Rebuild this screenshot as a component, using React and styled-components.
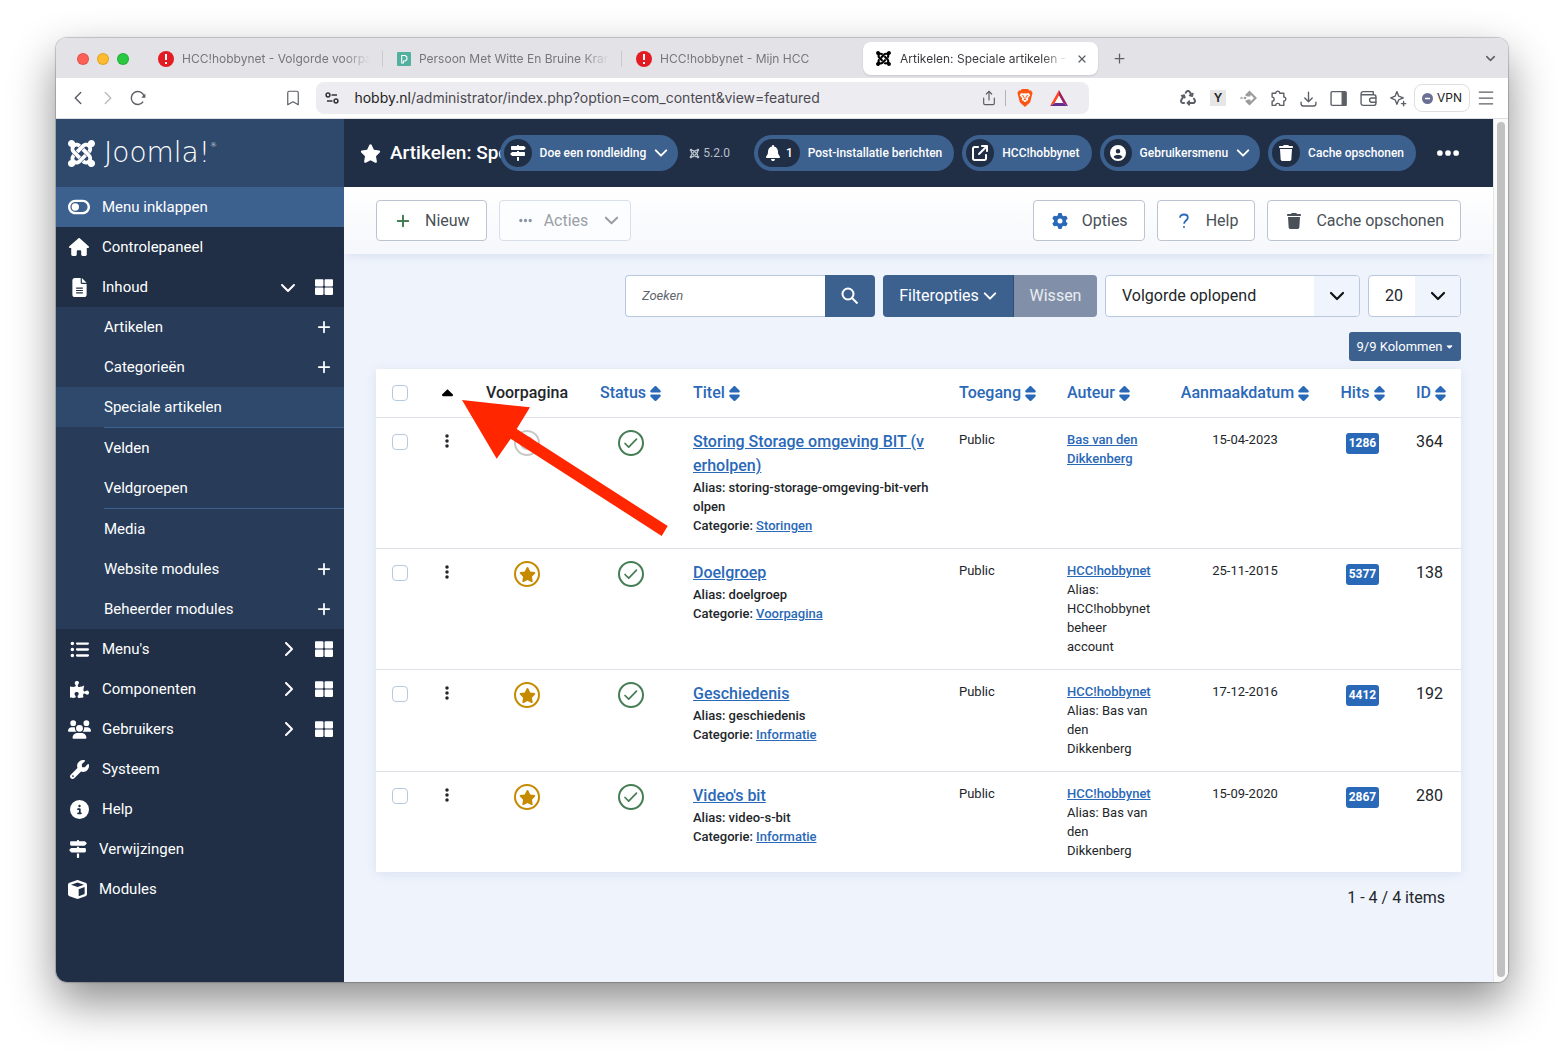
import React from 'react';
import styled, { createGlobalStyle, css } from 'styled-components';
import {
  FaStar, FaSignsPost, FaBell, FaArrowUpRightFromSquare, FaCircleUser, FaTrash, FaEllipsis,
  FaToggleOff, FaHouse, FaFileLines, FaChevronDown, FaChevronRight, FaListUl,
  FaUsers, FaWrench, FaCircleInfo, FaCube, FaGear, FaSort, FaCaretUp, FaCaretDown, FaEllipsisVertical,
  FaJoomla, FaCircle, FaRecycle,
} from 'react-icons/fa6';
import { FaThLarge, FaPuzzlePiece } from 'react-icons/fa';
import {
  ChevronLeft, ChevronRight, ChevronDown, Bookmark, Share, Menu, Plus, X,
} from 'lucide-react';

const c = {
  navy: '#202f46',
  submenu: '#283c59',
  active: '#2e496c',
  blue: '#3d618f',
  link: '#2a69b8',
  page: '#eff3fc',
  border: '#b8c8e0',
  green: '#457d54',
  gold: '#c58a00',
};

const GlobalStyle = createGlobalStyle`
  *, *::before, *::after { box-sizing: border-box; }
  body { margin: 0; background: #fff; color: #22262a; font-family: Roboto, "Liberation Sans", sans-serif; font-size: 16px; line-height: 24px; }
  button, input, select { font: inherit; color: inherit; margin: 0; }
  button { cursor: pointer; }
  svg { display: block; flex: none; }
  a { color: inherit; text-decoration: none; }
`;

const Desktop = styled.div`
  display: flex;
  min-height: 100vh;
  padding: 38px 56px 74px;
`;

const BrowserWindow = styled.div`
  flex: 1;
  min-width: 0;
  display: flex;
  flex-direction: column;
  overflow: hidden;
  border-radius: 11px;
  background: #fff;
  box-shadow: 0 0 1px 1px rgba(0, 0, 0, 0.2), 0 20px 46px rgba(0, 0, 0, 0.45);
`;

/* ---------- browser chrome ---------- */

const chromeFont = css`
  font-family: Inter, "Liberation Sans", sans-serif;
  line-height: 20px;
`;

const TabStrip = styled.div`
  ${chromeFont}
  display: flex;
  align-items: center;
  height: 40px;
  padding: 1px 10px 0 21px;
  background: #e3e2e7;
  color: #77767b;
  font-size: 12px;
`;

const Lights = styled.div`
  display: flex;
  gap: 8px;
  margin-right: 15px;
`;

const Light = styled.button`
  width: 12px;
  height: 12px;
  padding: 0;
  border: 1px solid rgba(0, 0, 0, 0.12);
  border-radius: 50%;
  background: ${(p) => p.$color};
`;

const Tab = styled.div`
  display: flex;
  align-items: center;
  gap: 8px;
  width: 239px;
  height: 16px;
  padding: 0 12px 0 14px;
  border-right: 1px solid ${(p) => (p.$last ? 'transparent' : '#cac9ce')};
`;

const ActiveTab = styled.div`
  display: flex;
  align-items: center;
  gap: 8px;
  width: 235px;
  height: 33px;
  margin: 0 13px 0 2px;
  padding: 0 10px 0 12px;
  border-radius: 8px;
  background: #fff;
  color: #3a3a3e;
  box-shadow: 0 1px 2px rgba(0, 0, 0, 0.12);
`;

const TabTitle = styled.span`
  flex: 1;
  min-width: 0;
  overflow: hidden;
  white-space: nowrap;
  mask-image: linear-gradient(to right, #000 calc(100% - 26px), transparent);
`;

const IconButton = styled.button`
  display: flex;
  align-items: center;
  justify-content: center;
  width: ${(p) => p.$w || 16}px;
  height: 20px;
  padding: 0;
  border: 0;
  background: none;
  color: ${(p) => p.$color || '#5c5f66'};
  ${(p) => p.$push && 'margin-left: auto;'}
`;

const AddressRow = styled.div`
  ${chromeFont}
  display: flex;
  align-items: center;
  height: 41px;
  padding: 0 14px 0 7px;
  border-bottom: 1px solid #dfdfe2;
  background: #fff;
  font-size: 14px;
`;

const Spacer = styled.span`
  flex: ${(p) => p.$grow || 1} 1 0;
`;

const AddressBar = styled.div`
  flex: 0 1 773px;
  min-width: 0;
  display: flex;
  align-items: center;
  height: 32px;
  margin-left: 8px;
  padding: 0 4px 0 8px;
  border-radius: 8px;
  background: #edecf1;
`;

const Url = styled.span`
  flex: 1;
  min-width: 0;
  margin-left: 14px;
  overflow: hidden;
  white-space: nowrap;
  color: #4b4a50;
  b { font-weight: 400; color: #1e1e22; }
`;

const BarDivider = styled.span`
  width: 1px;
  height: 16px;
  margin: 0 11px 0 8px;
  background: #b4b3b8;
`;

const Extensions = styled.div`
  display: flex;
  align-items: center;
`;

const YBadge = styled.span`
  display: flex;
  align-items: center;
  justify-content: center;
  width: 16px;
  height: 16px;
  background: #e6e6e6;
  color: #222;
  font-size: 12px;
  font-weight: 600;
`;

const VpnButton = styled.button`
  display: flex;
  align-items: center;
  gap: 4px;
  height: 28px;
  margin: 0 8px 0 1px;
  padding: 0 7px;
  border: 1px solid #dedee3;
  border-radius: 8px;
  background: #fff;
  color: #222;
  font-size: 12px;
`;

/* ---------- page frame ---------- */

const Viewport = styled.div`
  flex: 1;
  display: flex;
  background: ${c.page};
`;

const Sidebar = styled.nav`
  flex: none;
  width: 288px;
  background: ${c.navy};
  color: #fff;
  font-size: 15px;
`;

const Brand = styled.a`
  display: flex;
  align-items: center;
  gap: 7px;
  height: 68px;
  padding: 0 10px;
  background: ${c.active};
`;

const Wordmark = styled.span`
  display: flex;
  font-family: "DejaVu Sans", "Open Sans", sans-serif;
  font-size: 28px;
  font-weight: 200;
  line-height: 32px;
  sup { font-size: 7px; line-height: 16px; }
`;

const MenuRow = styled.div`
  display: flex;
  align-items: center;
  height: 40px;
  padding-right: 11px;
  background: ${(p) => (p.$collapse ? c.blue : 'transparent')};
`;

const MenuLink = styled.a`
  flex: 1;
  display: flex;
  align-items: center;
  gap: 11px;
  padding-left: 11px;
`;

const MenuIcon = styled.span`
  display: flex;
  justify-content: center;
  width: ${(p) => (p.$compact ? 21 : 24)}px;
`;

const Actions = styled.span`
  display: flex;
  align-items: center;
  gap: 19px;
`;

const Submenu = styled.ul`
  margin: 0;
  padding: 0;
  list-style: none;
  background: ${c.submenu};
`;

const SubItem = styled.li`
  display: flex;
  align-items: center;
  justify-content: space-between;
  height: 40px;
  padding: 0 13px 0 48px;
  background: ${(p) => (p.$active ? c.active : 'transparent')};
`;

const SubDivider = styled.li`
  height: 1px;
  margin-left: 48px;
  background: ${c.blue};
`;

const Main = styled.div`
  flex: 1;
  min-width: 0;
`;

const ScrollTrack = styled.div`
  flex: none;
  width: 15px;
  padding: 3px 3px 5px 3px;
  border-left: 1px solid #e6e6e6;
  background: #fafafa;
`;

const ScrollThumb = styled.div`
  width: 8px;
  height: 100%;
  border-radius: 4px;
  background: #c1c1c1;
`;

/* ---------- top bar ---------- */

const TopBar = styled.header`
  display: flex;
  align-items: center;
  height: 68px;
  padding: 0 32px 0 16px;
  background: ${c.navy};
  color: #fff;
`;

const PageTitle = styled.h1`
  flex: 1 1 0;
  min-width: 0;
  display: flex;
  align-items: center;
  gap: 9px;
  margin: 0 -4px 0 0;
  overflow: hidden;
  white-space: nowrap;
  font-size: 19px;
  font-weight: 500;
  line-height: 28px;
`;

const Pills = styled.div`
  position: relative;
  display: flex;
  align-items: center;
  gap: 8px;
  font-size: 12px;
  line-height: 16px;
`;

const Pill = styled.button`
  display: flex;
  align-items: center;
  gap: 8px;
  height: 36px;
  padding: 0 ${(p) => (p.$menu ? 10 : 12)}px 0 4px;
  border: 0;
  border-radius: 18px;
  background: ${c.blue};
  color: #fff;
  font-weight: 500;
  white-space: nowrap;
`;

const PillBadge = styled.span`
  display: flex;
  align-items: center;
  justify-content: center;
  gap: 5px;
  min-width: 28px;
  height: 28px;
  padding: 0 ${(p) => (p.$wide ? 7 : 0)}px;
  border-radius: 14px;
  background: ${c.navy};
`;

const Version = styled.span`
  display: flex;
  align-items: center;
  gap: 3px;
  margin: 0 16px 0 3px;
  color: #b6bfcc;
`;

const MoreButton = styled.button`
  display: flex;
  margin-left: 11px;
  padding: 0;
  border: 0;
  background: none;
  color: #fff;
`;

/* ---------- toolbar and filters ---------- */

const Toolbar = styled.div`
  display: flex;
  align-items: center;
  gap: 12px;
  height: 67px;
  padding: 0 32px;
  background: linear-gradient(#fff, #f5f7fb);
  box-shadow: 0 4px 10px -4px rgba(70, 105, 165, 0.2);
`;

const ToolButton = styled.button`
  display: flex;
  align-items: center;
  gap: 12px;
  height: 41px;
  padding: 0 16px;
  border: 1px solid #bcc4d2;
  border-radius: 4px;
  background: #fff;
  color: #495057;
  white-space: nowrap;
  &:disabled {
    gap: 8px;
    padding-right: 11px;
    border-color: #d9dfe8;
    background: #fcfdfe;
    color: #9a9fa5;
    cursor: default;
  }
`;

const ToolIcon = styled.span`
  display: flex;
  justify-content: center;
  width: 20px;
  color: ${(p) => p.$color};
`;

const ChevronGap = styled.span`
  display: flex;
  margin-left: 8px;
`;

const Content = styled.main`
  padding: 21px 32px;
`;

const Filters = styled.form`
  display: flex;
  justify-content: flex-end;
  gap: 8px;
`;

const Group = styled.div`
  display: flex;
  height: 42px;
`;

const SearchInput = styled.input`
  width: 200px;
  padding: 0 16px;
  border: 1px solid ${c.border};
  border-right: 0;
  border-radius: 4px 0 0 4px;
  background: #fff;
  font-size: 13px;
  &::placeholder { color: #5f666d; font-style: italic; opacity: 1; }
`;

const SolidButton = styled.button`
  display: flex;
  align-items: center;
  justify-content: center;
  gap: 4px;
  width: ${(p) => p.$w}px;
  padding: 0;
  border: 0;
  border-radius: ${(p) => p.$radius};
  background: ${(p) => (p.$muted ? '#8190a8' : c.blue)};
  color: ${(p) => (p.$muted ? '#e9edf3' : '#fff')};
  ${(p) => p.$edge && 'border-right: 1px solid #2b4b78;'}
`;

const SelectBox = styled.div`
  position: relative;
  width: ${(p) => p.$w}px;
  height: 42px;
`;

const Select = styled.select`
  appearance: none;
  width: 100%;
  height: 100%;
  padding: 0 48px 0 16px;
  border: 1px solid ${c.border};
  border-radius: 4px;
  background: #fff;
`;

const SelectArrow = styled.span`
  position: absolute;
  top: 1px;
  right: 1px;
  bottom: 1px;
  width: 45px;
  display: flex;
  align-items: center;
  justify-content: center;
  border-radius: 0 3px 3px 0;
  background: #f0f4fc;
  color: #101214;
  pointer-events: none;
`;

const ColumnsRow = styled.div`
  display: flex;
  justify-content: flex-end;
  margin: 15px 0 8px;
`;

const ColumnsButton = styled.button`
  display: flex;
  align-items: center;
  justify-content: center;
  gap: 2px;
  height: 29px;
  width: 112px;
  padding: 0;
  border: 0;
  border-radius: 3px;
  background: ${c.blue};
  color: #fff;
  font-size: 13px;
`;

/* ---------- article table ---------- */

const TableCard = styled.div`
  position: relative;
  background: #fff;
  box-shadow: 0 2px 10px rgba(70, 105, 165, 0.12);
`;

const Table = styled.table`
  width: 100%;
  table-layout: fixed;
  border-collapse: separate;
  border-spacing: 0;
`;

const Th = styled.th`
  width: ${(p) => (p.$w ? `${p.$w}px` : 'auto')};
  height: 49px;
  padding: 0 0 0 ${(p) => (p.$center ? 0 : 16)}px;
  border-bottom: 1px solid #dee2e6;
  text-align: ${(p) => (p.$center ? 'center' : 'left')};
  font-weight: 500;
  white-space: nowrap;
`;

const SortLink = styled.a`
  display: inline-flex;
  align-items: center;
  gap: 4px;
  vertical-align: middle;
  color: ${(p) => (p.$current ? '#000' : c.link)};
  svg { width: 11px; height: ${(p) => (p.$current ? 20 : 17)}px; }
`;

const Td = styled.td`
  padding: 12px 13px 13px 16px;
  ${(p) => p.$center && 'padding-left: 0; padding-right: 0; text-align: center;'}
  border-bottom: 1px solid #dee2e6;
  vertical-align: top;
  tr:last-child > & { padding-bottom: 12px; border-bottom: 0; }
`;

const SmallTd = styled(Td)`
  font-size: 13px;
  line-height: 19px;
`;

const Check = styled.input`
  appearance: none;
  display: block;
  width: 16px;
  height: 16px;
  margin: ${(p) => (p.$row ? '4px 0 0' : 0)};
  border: 1px solid ${c.border};
  border-radius: 4px;
  background: #fff;
`;

const CenterIcon = styled.span`
  display: flex;
  align-items: center;
  justify-content: center;
  height: 22px;
`;

const RoundButton = styled.button`
  display: flex;
  align-items: center;
  justify-content: center;
  width: 26px;
  height: 26px;
  margin: 0 auto;
  padding: 0;
  border: 2px solid ${(p) => p.$color};
  border-radius: 50%;
  background: #fff;
  color: ${(p) => p.$color};
`;

const TitleLink = styled.a`
  display: block;
  color: ${c.link};
  font-weight: 500;
  text-decoration: underline;
  word-break: break-all;
`;

const Small = styled.div`
  font-size: 13px;
  line-height: 19px;
  font-weight: ${(p) => (p.$strong ? 500 : 400)};
  word-break: ${(p) => (p.$strong ? 'break-all' : 'normal')};
`;

const InlineLink = styled.a`
  color: ${c.link};
  font-weight: 500;
  text-decoration: underline;
`;

const Badge = styled.span`
  display: inline-block;
  height: 21px;
  margin-top: 3px;
  padding: 0 3px;
  border-radius: 3px;
  background: ${c.link};
  color: #fff;
  font-size: 12px;
  font-weight: 700;
  line-height: 21px;
  vertical-align: top;
`;

const Pointer = styled.svg`
  position: absolute;
  left: 84px;
  top: 29px;
  pointer-events: none;
`;

const Count = styled.p`
  margin: 14px 16px 0;
  text-align: right;
`;

/* ---------- drawn icons ---------- */

const Stroke = ({ size = 16, w = 2, d, children }) => (
  <svg width={size} height={size} viewBox="0 0 16 16" fill="none" stroke="currentColor" strokeWidth={w} strokeLinecap="round" strokeLinejoin="round" aria-hidden="true">
    {d && <path d={d} />}
    {children}
  </svg>
);
const ThinPlus = ({ w = 2 }) => <Stroke size={14} w={w} d="M8 2v12M2 8h12" />;
const CheckMark = () => <Stroke size={16} w={1.7} d="M2 8.500l3.700 3.700 7.800-8" />;
const Chevron = ({ size = 14 }) => <Stroke size={size} w={2.2} d="M2 5l6 6 6-6" />;
const PuzzleOutline = () => (
  <Stroke size={17} w={1.3} d="M2 3h3.400a1.900 1.900 0 1 1 3.800 0H13v3.600a1.900 1.900 0 1 1 0 3.800V14.500H9.200a1.900 1.900 0 0 0-3.800 0H2v-4a1.900 1.900 0 0 0 0-3.800z" />
);
const DownloadTray = () => <Stroke size={17} w={1.3} d="M8 2v8.500M4.500 7.500L8 11l3.500-3.500M1 11.500v1.500a2 2 0 0 0 2 2h10a2 2 0 0 0 2-2v-1.500" />;
const SidePanel = () => (
  <Stroke size={17} w={1.3}>
    <rect x="1" y="1.500" width="14" height="13" rx="1" />
    <path d="M11.500 2h3.500v12.500h-3.500z" fill="currentColor" />
  </Stroke>
);
const WalletIcon = () => (
  <Stroke size={17} w={1.3}>
    <path d="M1 4.500h12a2 2 0 0 1 2 2V12.500a2 2 0 0 1-2 2H3a2 2 0 0 1-2-2V3.500a2 2 0 0 1 2-2h9.500v3" />
    <path d="M15 7.500h-4a2 2 0 0 0 0 4h4" />
  </Stroke>
);
const Sparkles = () => (
  <Stroke size={17} w={1.3}>
    <path d="M6.500 1.500l1.700 4.300 4.300 1.700-4.300 1.700-1.700 4.300-1.700-4.300L.7 7.500l4.100-1.700z" />
    <path d="M12.800 10.800v4M10.800 12.800h4" />
  </Stroke>
);
const DiamondArrow = () => (
  <svg width="17" height="16" viewBox="0 0 17 16" aria-hidden="true">
    <path d="M9.500 0.500L17 8l-7.500 7.500L5 11l3-1.500h2.500v2L14 8l-3.500-3.500v2H7L5 5z" fill="#9b9b9b" />
    <circle cx="1.500" cy="8" r="1.300" fill="#b5b5b5" /><circle cx="5" cy="8" r="1.300" fill="#9b9b9b" />
  </svg>
);
const AlertFavicon = () => (
  <svg width="16" height="16" viewBox="0 0 16 16" aria-hidden="true">
    <circle cx="8" cy="8" r="8" fill="#e31b23" />
    <path d="M8 3v6M8 11v2" stroke="#fff" strokeWidth="2" />
  </svg>
);
const DocFavicon = () => (
  <svg width="14" height="14" viewBox="0 0 14 14" aria-hidden="true">
    <rect width="14" height="14" rx="1" fill="#52b09f" />
    <path d="M4.700 3.500h3.600l1.600 1.600v2.400L8.300 9H6.500v2H4.700z" fill="none" stroke="#fff" strokeWidth="1.100" />
  </svg>
);
const Reload = () => (
  <svg width="16" height="16" viewBox="0 0 16 16" fill="none" stroke="#5c5f66" strokeWidth="1.400" aria-hidden="true">
    <path d="M13.200 11.600A6.500 6.500 0 1 1 14 6" />
    <path d="M15.400 3.600v4.200h-4.200z" fill="#5c5f66" stroke="none" />
  </svg>
);
const SiteSettings = () => (
  <svg width="16" height="16" viewBox="0 0 16 16" fill="none" stroke="#333338" strokeWidth="1.500" aria-hidden="true">
    <circle cx="4" cy="5" r="1.900" /><path d="M7.500 5H13" />
    <circle cx="12" cy="11" r="1.900" /><path d="M3 11h5.500" />
  </svg>
);
const BraveShield = () => (
  <svg width="16" height="18" viewBox="0 0 16 18" aria-hidden="true">
    <path d="M5 0h6l1.500 1.600 1.600-.2L15.600 4 15 6l-1.800 7.200L8 18l-5.200-4.800L1 6 .4 4l1.500-2.600 1.600.2z" fill="#fb5413" />
    <path d="M4.200 4l2.200.6L8 4.200l1.600.4 2.200-.6 1.500 2.200-2.500 3 .6 1.500L8 13.200l-3.400-2.500.6-1.500-2.500-3z" fill="#fff" />
    <path d="M4.800 6.400l2 .7-.5 1.600M11.200 6.400l-2 .7.5 1.600M8 8v2.400M6.500 11L8 10.200l1.500.8" fill="none" stroke="#fb5413" strokeWidth=".9" />
  </svg>
);
const BatTriangle = () => (
  <svg width="18" height="16" viewBox="0 0 18 16" aria-hidden="true">
    <path d="M9 0L0 16l5-3 4-7z" fill="#ff4724" />
    <path d="M9 0l9 16-5-3-4-7z" fill="#9e1f63" />
    <path d="M0 16h18l-5-3H5z" fill="#662d91" />
    <path d="M9 5.600L13.200 13H4.800z" fill="#fff" />
  </svg>
);
const SearchIcon = () => (
  <svg width="18" height="18" viewBox="0 0 18 18" fill="none" stroke="currentColor" strokeWidth="2" aria-hidden="true">
    <circle cx="7" cy="7" r="5.500" /><path d="M11 11l5.500 5.500" />
  </svg>
);
const QuestionIcon = () => (
  <svg width="12" height="16" viewBox="0 0 12 16" fill="none" stroke="currentColor" strokeWidth="1.800" aria-hidden="true">
    <path d="M2 4.800C2 2.500 3.800 1.500 6 1.500s3.800 1.200 3.800 3.200c0 2.700-3.700 3-3.700 6" />
    <circle cx="6" cy="14" r=".6" fill="currentColor" strokeWidth="1" />
  </svg>
);
const VpnDot = () => (
  <svg width="11" height="11" viewBox="0 0 11 11" aria-hidden="true">
    <circle cx="5.500" cy="5.500" r="5.500" fill="#6b6f94" /><path d="M3 5.500h5" stroke="#fff" strokeWidth="1.400" />
  </svg>
);

/* ---------- data ---------- */

const subItems = [
  { label: 'Artikelen', add: true },
  { label: 'Categorieën', add: true },
  { label: 'Speciale artikelen', active: true },
  null,
  { label: 'Velden' },
  { label: 'Veldgroepen' },
  null,
  { label: 'Media' },
  { label: 'Website modules', add: true },
  { label: 'Beheerder modules', add: true },
];

const lowerMenu = [
  { label: "Menu's", icon: FaListUl, size: 19, more: true },
  { label: 'Componenten', icon: FaPuzzlePiece, size: 19, more: true },
  { label: 'Gebruikers', icon: FaUsers, size: 23, more: true },
  { label: 'Systeem', icon: FaWrench, size: 19 },
  { label: 'Help', icon: FaCircleInfo, size: 19 },
  { label: 'Verwijzingen', icon: FaSignsPost, size: 18, compact: true },
  { label: 'Modules', icon: FaCube, size: 19, compact: true },
];

const columns = [
  { label: 'Voorpagina', w: 114, center: true, plain: true },
  { label: 'Status', w: 93, center: true },
  { label: 'Titel' },
  { label: 'Toegang', w: 108 },
  { label: 'Auteur', w: 114 },
  { label: 'Aanmaakdatum', w: 160, center: true },
  { label: 'Hits', w: 75, center: true },
  { label: 'ID', w: 61 },
];

const articles = [
  { title: 'Storing Storage omgeving BIT (verholpen)', alias: 'storing-storage-omgeving-bit-verholpen', category: 'Storingen', author: 'Bas van den Dikkenberg', date: '15-04-2023', hits: 1286, id: 364 },
  { title: 'Doelgroep', alias: 'doelgroep', category: 'Voorpagina', featured: true, author: 'HCC!hobbynet', authorAlias: 'HCC!hobbynet beheer account', date: '25-11-2015', hits: 5377, id: 138 },
  { title: 'Geschiedenis', alias: 'geschiedenis', category: 'Informatie', featured: true, author: 'HCC!hobbynet', authorAlias: 'Bas van den Dikkenberg', date: '17-12-2016', hits: 4412, id: 192 },
  { title: "Video's bit", alias: 'video-s-bit', category: 'Informatie', featured: true, author: 'HCC!hobbynet', authorAlias: 'Bas van den Dikkenberg', date: '15-09-2020', hits: 2867, id: 280 },
];

const MenuEntry = ({ label, icon: Icon, size, compact, more, open, collapse }) => (
  <MenuRow $collapse={collapse}>
    <MenuLink href="#">
      <MenuIcon $compact={compact}><Icon size={size} /></MenuIcon>
      {label}
    </MenuLink>
    {more && (
      <Actions>
        {open ? <FaChevronDown size={16} /> : <FaChevronRight size={16} />}
        <FaThLarge size={18} />
      </Actions>
    )}
  </MenuRow>
);

export default function App() {
  return (
    <>
      <GlobalStyle />
      <Desktop>
        <BrowserWindow>
          <TabStrip>
            <Lights>
              <Light $color="#fe5f57" aria-label="Close" />
              <Light $color="#febb2e" aria-label="Minimise" />
              <Light $color="#28c840" aria-label="Zoom" />
            </Lights>
            <Tab><AlertFavicon /><TabTitle>HCC!hobbynet - Volgorde voorpagina</TabTitle></Tab>
            <Tab><DocFavicon /><TabTitle>Persoon Met Witte En Bruine Krant</TabTitle></Tab>
            <Tab $last><AlertFavicon /><TabTitle>HCC!hobbynet - Mijn HCC</TabTitle></Tab>
            <ActiveTab>
              <FaJoomla size={17} color="#000" />
              <TabTitle>Artikelen: Speciale artikelen - HCC</TabTitle>
              <IconButton $w={12} aria-label="Close tab"><X size={12} strokeWidth={2.5} /></IconButton>
            </ActiveTab>
            <IconButton aria-label="New tab"><Plus size={15} strokeWidth={2} /></IconButton>
            <IconButton $push aria-label="Tabs"><ChevronDown size={15} strokeWidth={2.4} /></IconButton>
          </TabStrip>

          <AddressRow>
            <IconButton $w={30} aria-label="Back"><ChevronLeft size={22} strokeWidth={1.6} /></IconButton>
            <IconButton $w={30} $color="#bbbbc0" aria-label="Forward"><ChevronRight size={22} strokeWidth={1.6} /></IconButton>
            <IconButton $w={30} aria-label="Reload"><Reload /></IconButton>
            <Spacer $grow={3} />
            <IconButton $w={30} aria-label="Bookmark"><Bookmark size={18} strokeWidth={1.6} /></IconButton>
            <AddressBar>
              <SiteSettings />
              <Url><b>hobby.nl</b>/administrator/index.php?option=com_content&amp;view=featured</Url>
              <IconButton aria-label="Share"><Share size={16} strokeWidth={1.8} /></IconButton>
              <BarDivider />
              <IconButton aria-label="Shields"><BraveShield /></IconButton>
              <IconButton $w={52} aria-label="Rewards"><BatTriangle /></IconButton>
            </AddressBar>
            <Spacer $grow={2} />
            <Extensions>
              <IconButton $w={30} aria-label="Recycle"><FaRecycle size={16} /></IconButton>
              <IconButton $w={30} aria-label="Y"><YBadge>Y</YBadge></IconButton>
              <IconButton $w={30} aria-label="Redirects"><DiamondArrow /></IconButton>
              <IconButton $w={30} aria-label="Extensions"><PuzzleOutline /></IconButton>
              <IconButton $w={30} aria-label="Downloads"><DownloadTray /></IconButton>
              <IconButton $w={30} aria-label="Side panel"><SidePanel /></IconButton>
              <IconButton $w={30} aria-label="Wallet"><WalletIcon /></IconButton>
              <IconButton $w={30} aria-label="Assistant"><Sparkles /></IconButton>
              <VpnButton><VpnDot />VPN</VpnButton>
              <IconButton aria-label="Menu"><Menu size={20} strokeWidth={1.5} /></IconButton>
            </Extensions>
          </AddressRow>

          <Viewport>
            <Sidebar>
              <Brand href="#">
                <FaJoomla size={31} />
                <Wordmark>Joomla!<sup>®</sup></Wordmark>
              </Brand>
              <MenuEntry label="Menu inklappen" icon={FaToggleOff} size={22} collapse />
              <MenuEntry label="Controlepaneel" icon={FaHouse} size={20} />
              <MenuEntry label="Inhoud" icon={FaFileLines} size={19} more open />
              <Submenu>
                {subItems.map((item, i) => (item ? (
                  <SubItem key={item.label} $active={item.active}>
                    <a href="#">{item.label}</a>
                    {item.add && <ThinPlus />}
                  </SubItem>
                ) : <SubDivider key={i} />))}
              </Submenu>
              {lowerMenu.map((item) => <MenuEntry key={item.label} {...item} />)}
            </Sidebar>

            <Main>
              <TopBar>
                <PageTitle><FaStar size={21} />Artikelen: Speciale artikelen</PageTitle>
                <Pills>
                  <Pill $menu><PillBadge><FaSignsPost size={16} /></PillBadge>Doe een rondleiding<Chevron /></Pill>
                  <Version><FaJoomla size={11} />5.2.0</Version>
                  <Pill><PillBadge $wide><FaBell size={16} />1</PillBadge>Post-installatie berichten</Pill>
                  <Pill><PillBadge><FaArrowUpRightFromSquare size={16} /></PillBadge>HCC!hobbynet</Pill>
                  <Pill $menu><PillBadge><FaCircleUser size={16} /></PillBadge>Gebruikersmenu<Chevron /></Pill>
                  <Pill><PillBadge><FaTrash size={16} /></PillBadge>Cache opschonen</Pill>
                  <MoreButton aria-label="Meer"><FaEllipsis size={26} /></MoreButton>
                </Pills>
              </TopBar>

              <Toolbar>
                <ToolButton><ToolIcon $color={c.green}><ThinPlus w={2.3} /></ToolIcon>Nieuw</ToolButton>
                <ToolButton disabled>
                  <ToolIcon $color="#8995a6"><FaEllipsis size={15} /></ToolIcon>Acties
                  <ChevronGap><Chevron size={15} /></ChevronGap>
                </ToolButton>
                <Spacer />
                <ToolButton><ToolIcon $color={c.link}><FaGear size={16} /></ToolIcon>Opties</ToolButton>
                <ToolButton><ToolIcon $color={c.link}><QuestionIcon /></ToolIcon>Help</ToolButton>
                <ToolButton><ToolIcon $color="#495057"><FaTrash size={16} /></ToolIcon>Cache opschonen</ToolButton>
              </Toolbar>

              <Content>
                <Filters onSubmit={(e) => e.preventDefault()}>
                  <Group>
                    <SearchInput type="text" placeholder="Zoeken" aria-label="Zoeken" />
                    <SolidButton $w={50} $radius="0 4px 4px 0" aria-label="Zoek"><SearchIcon /></SolidButton>
                  </Group>
                  <Group>
                    <SolidButton type="button" $w={131} $radius="4px 0 0 4px" $edge>Filteropties<Chevron /></SolidButton>
                    <SolidButton type="button" $w={83} $radius="0 4px 4px 0" $muted>Wissen</SolidButton>
                  </Group>
                  <SelectBox $w={255}>
                    <Select aria-label="Sorteren"><option>Volgorde oplopend</option></Select>
                    <SelectArrow><Chevron size={16} /></SelectArrow>
                  </SelectBox>
                  <SelectBox $w={93}>
                    <Select aria-label="Aantal"><option>20</option></Select>
                    <SelectArrow><Chevron size={16} /></SelectArrow>
                  </SelectBox>
                </Filters>

                <ColumnsRow><ColumnsButton>9/9 Kolommen<FaCaretDown size={9} /></ColumnsButton></ColumnsRow>

                <TableCard>
                  <Table>
                    <thead>
                      <tr>
                        <Th $w={48}><Check type="checkbox" aria-label="Alles selecteren" /></Th>
                        <Th $w={46} $center><SortLink href="#" $current aria-label="Volgorde"><FaCaretUp /></SortLink></Th>
                        {columns.map((col) => (
                          <Th key={col.label} $w={col.w} $center={col.center}>
                            {col.plain ? col.label : <SortLink href="#">{col.label}<FaSort /></SortLink>}
                          </Th>
                        ))}
                      </tr>
                    </thead>
                    <tbody>
                      {articles.map((a) => (
                        <tr key={a.id}>
                          <Td><Check $row type="checkbox" aria-label={a.title} /></Td>
                          <Td $center><CenterIcon><FaEllipsisVertical size={16} /></CenterIcon></Td>
                          <Td $center>
                            <RoundButton $color={a.featured ? c.gold : '#c8c8c8'} aria-label="Speciaal">
                              {a.featured ? <FaStar size={17} /> : <FaCircle size={14} />}
                            </RoundButton>
                          </Td>
                          <Td $center><RoundButton $color={c.green} aria-label="Gepubliceerd"><CheckMark /></RoundButton></Td>
                          <Td>
                            <TitleLink href="#">{a.title}</TitleLink>
                            <Small $strong>Alias: {a.alias}</Small>
                            <Small $strong>Categorie: <InlineLink href="#">{a.category}</InlineLink></Small>
                          </Td>
                          <SmallTd>Public</SmallTd>
                          <SmallTd>
                            <InlineLink href="#">{a.author}</InlineLink>
                            {a.authorAlias && <Small>Alias: {a.authorAlias}</Small>}
                          </SmallTd>
                          <SmallTd $center>{a.date}</SmallTd>
                          <Td $center><Badge>{a.hits}</Badge></Td>
                          <Td>{a.id}</Td>
                        </tr>
                      ))}
                    </tbody>
                  </Table>
                  <Pointer width="210" height="140" viewBox="0 0 210 140" aria-hidden="true">
                    <path d="M2 2L70 9.300L56.700 31L207.700 128L201.700 138L50.700 40.700L36.700 60.700z" fill="#ff2600" />
                  </Pointer>
                </TableCard>
                <Count>1 - 4 / 4 items</Count>
              </Content>
            </Main>
            <ScrollTrack><ScrollThumb /></ScrollTrack>
          </Viewport>
        </BrowserWindow>
      </Desktop>
    </>
  );
}
